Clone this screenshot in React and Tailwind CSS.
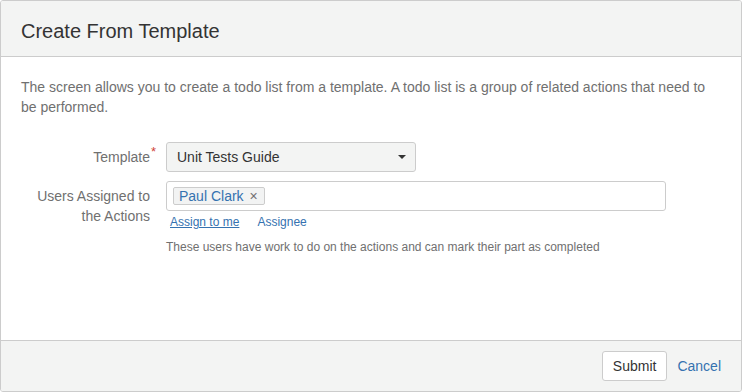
import React from 'react';

const font = { fontFamily: '"Liberation Sans", Arial, sans-serif' };

function App() {
  return (
    <div
      className="w-[742px] h-[392px] bg-white border border-[#cccccc] rounded-[3px] flex flex-col overflow-hidden text-[#333333]"
      style={font}
    >
      <div className="h-[56px] shrink-0 bg-[#f3f4f3] border-b border-[#cccccc] flex items-center px-5">
        <h2 className="text-[20px] leading-[24px] text-[#333333] pt-[5px]">Create From Template</h2>
      </div>

      <div className="flex-1 px-5 pt-[20px]">
        <p className="text-[14px] leading-[20px] text-[#707070]">
          The screen allows you to create a todo list from a template. A todo list is a group of related actions that need to be performed.
        </p>

        <div className="mt-[25px] flex">
          <div className="w-[145px] shrink-0 pr-[16px] text-right text-[14px] leading-[20px] text-[#707070] pt-[5px]">
            <span className="relative">
              Template
              <span className="absolute -right-[6px] -top-[7px] text-[#d04437] text-[13px]">*</span>
            </span>
          </div>
          <button className="w-[250px] h-[30px] bg-[#f3f4f3] border border-[#cccccc] rounded-[3px] flex items-center justify-between pl-[10px] pr-[9px] text-[14px] text-[#333333]">
            <span>Unit Tests Guide</span>
            <span className="w-0 h-0 border-l-[4px] border-r-[4px] border-t-[4px] border-l-transparent border-r-transparent border-t-[#333333]" />
          </button>
        </div>

        <div className="mt-[9px] flex">
          <div className="w-[145px] shrink-0 pr-[16px] text-right text-[14px] leading-[20px] text-[#707070] pt-[5px]">
            Users Assigned to the Actions
          </div>
          <div className="flex flex-col">
            <div className="w-[500px] h-[30px] border border-[#cccccc] rounded-[3px] flex items-center px-[6px]">
              <span className="h-[18px] flex items-center gap-[6px] border border-[#cccccc] rounded-[2px] bg-[#f2f3f3] pl-[5px] pr-[6px] text-[14px] text-[#3572b0]">
                Paul Clark
                <span className="text-[#707070] text-[14px] leading-none">×</span>
              </span>
            </div>
            <div className="flex gap-[18px] pl-[4px] mt-[3px] text-[12px] leading-[16px]">
              <a className="text-[#3572b0] underline">Assign to me</a>
              <a className="text-[#3572b0]">Assignee</a>
            </div>
            <div className="mt-[9px] text-[12px] leading-[16px] text-[#707070]">
              These users have work to do on the actions and can mark their part as completed
            </div>
          </div>
        </div>
      </div>

      <div className="h-[51px] shrink-0 bg-[#f3f4f3] border-t border-[#cccccc] flex items-center justify-end pr-[20px] gap-[10px]">
        <button className="h-[30px] px-[10px] bg-white border border-[#cccccc] rounded-[3px] text-[14px] text-[#333333]">
          Submit
        </button>
        <a className="text-[14px] text-[#3572b0]">Cancel</a>
      </div>
    </div>
  );
}

export default App;
